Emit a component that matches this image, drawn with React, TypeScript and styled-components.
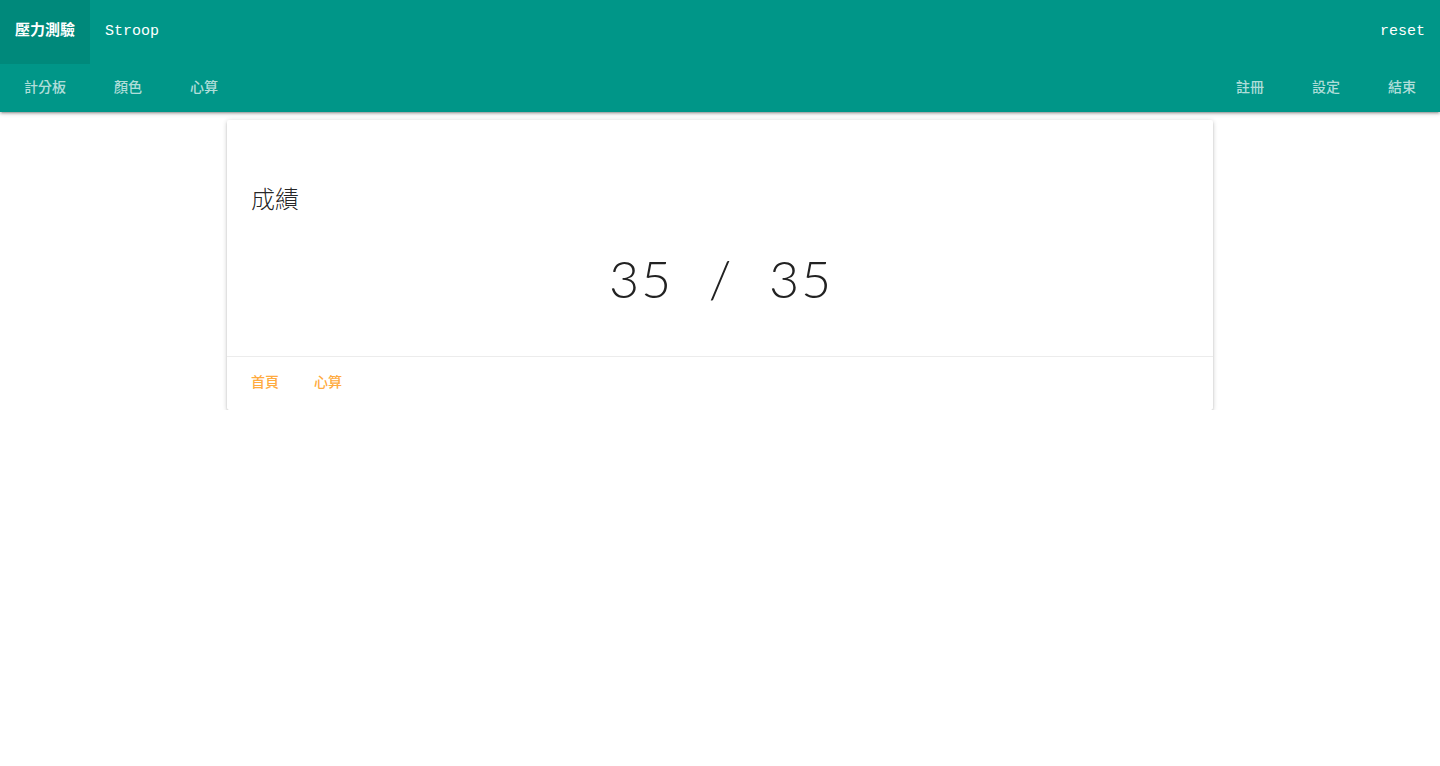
import React from "react";
import styled, { createGlobalStyle } from "styled-components";

const Global = createGlobalStyle`
  html, body { margin: 0; padding: 0; background: #fff; }
  body { font-family: Roboto, "Noto Sans CJK TC", sans-serif; }
  * { box-sizing: border-box; }
`;

const Nav = styled.nav`
  background: #009688;
  color: #fff;
  box-shadow: 0 2px 2px 0 rgba(0,0,0,0.14), 0 3px 1px -2px rgba(0,0,0,0.12), 0 1px 5px 0 rgba(0,0,0,0.2);
`;

const TopBar = styled.div`
  display: flex;
  align-items: center;
  height: 64px;
  line-height: 20px;
`;

const Brand = styled.div`
  width: 90px;
  height: 64px;
  display: flex;
  align-items: center;
  justify-content: center;
  padding-bottom: 5px;
  background: #00897b;
  font-family: Roboto, "Noto Sans CJK TC", sans-serif;
  font-weight: 700;
  font-size: 15px;
`;

const Mono = styled.div<{ $right?: boolean }>`
  font-family: "Liberation Mono", monospace;
  font-size: 15px;
  padding: 0 15px 1px;
  margin-left: ${(p) => (p.$right ? "auto" : "0")};
`;

const TabRow = styled.div`
  display: flex;
  height: 48px;
  align-items: stretch;
`;

const Tab = styled.a<{ $push?: boolean }>`
  display: flex;
  align-items: center;
  padding: 0 24px 5px;
  font-size: 14px;
  font-weight: 500;
  color: rgba(255, 255, 255, 0.7);
  font-family: Roboto, "Noto Sans CJK TC", sans-serif;
  margin-left: ${(p) => (p.$push ? "auto" : "0")};
`;

const Main = styled.main`
  display: flex;
  justify-content: center;
  padding-top: 8px;
`;

const Card = styled.div`
  width: 986px;
  background: #fff;
  border-radius: 2px;
  box-shadow: 0 2px 2px 0 rgba(0,0,0,0.14), 0 3px 1px -2px rgba(0,0,0,0.12), 0 1px 5px 0 rgba(0,0,0,0.2);
`;

const CardContent = styled.div`
  padding: 62px 24px 46px;
`;

const Title = styled.div`
  font-size: 24px;
  font-weight: 300;
  line-height: 32px;
  color: rgba(0,0,0,0.87);
  font-family: "Noto Sans CJK TC", sans-serif;
`;

const Score = styled.div`
  margin-top: 32px;
  display: flex;
  justify-content: center;
  font-family: Lato, sans-serif;
  font-weight: 300;
  font-size: 52px;
  line-height: 64px;
  color: #222;
`;

const Glyph = styled.span`
  display: inline-block;
  width: 32px;
  text-align: center;
`;

const CardAction = styled.div`
  display: flex;
  gap: 35px;
  border-top: 1px solid rgba(160,160,160,0.2);
  padding: 0 24px 5px;
  height: 54px;
  align-items: center;
`;

const ActionLink = styled.a`
  color: #ffab40;
  font-size: 14px;
  font-weight: 500;
  font-family: Roboto, "Noto Sans CJK TC", sans-serif;
`;

const score = "35 / 35";

export default function App() {
  return (
    <>
      <Global />
      <Nav>
        <TopBar>
          <Brand>壓力測驗</Brand>
          <Mono>Stroop</Mono>
          <Mono $right>reset</Mono>
        </TopBar>
        <TabRow>
          <Tab>計分板</Tab>
          <Tab>顏色</Tab>
          <Tab>心算</Tab>
          <Tab $push>註冊</Tab>
          <Tab>設定</Tab>
          <Tab>結束</Tab>
        </TabRow>
      </Nav>
      <Main>
        <Card>
          <CardContent>
            <Title>成績</Title>
            <Score>
              {score.split("").map((c, i) => (
                <Glyph key={i}>{c === " " ? "\u00a0" : c}</Glyph>
              ))}
            </Score>
          </CardContent>
          <CardAction>
            <ActionLink>首頁</ActionLink>
            <ActionLink>心算</ActionLink>
          </CardAction>
        </Card>
      </Main>
    </>
  );
}
